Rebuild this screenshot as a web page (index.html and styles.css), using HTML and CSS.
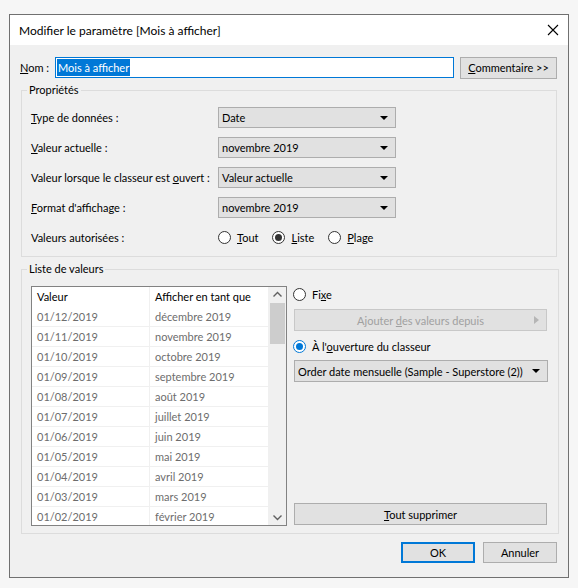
FILE: index.html
```html
<!DOCTYPE html>
<html lang="fr">
<head>
  <meta charset="UTF-8" />
  <title>Modifier le paramètre</title>
  <link rel="stylesheet" href="styles.css">
</head>
<body>

<div class="dialog">
  <div class="titlebar">
    <span class="title">Modifier le paramètre [Mois à afficher]</span>
    <svg class="close" width="12" height="12" viewBox="0 0 12 12">
      <path d="M1 1 L11 11 M11 1 L1 11" stroke="#000" stroke-width="1.1" fill="none"/>
    </svg>
  </div>

  <div class="dialog-body">
    <div class="name-row">
      <label class="name-label"><u>N</u>om :</label>
      <div class="name-input"><span class="selected">Mois à afficher</span></div>
      <button class="btn comment-btn"><u>C</u>ommentaire &gt;&gt;</button>
    </div>

    <fieldset class="group">
      <legend>Propriétés</legend>
      <div class="props">
        <label><u>T</u>ype de données :</label>
        <div class="combo"><span>Date</span><span class="arrow"></span></div>

        <label><u>V</u>aleur actuelle :</label>
        <div class="combo"><span>novembre 2019</span><span class="arrow"></span></div>

        <label>Valeur lorsque le classeur est <u>o</u>uvert :</label>
        <div class="combo"><span>Valeur actuelle</span><span class="arrow"></span></div>

        <label><u>F</u>ormat d'affichage :</label>
        <div class="combo"><span>novembre 2019</span><span class="arrow"></span></div>

        <label>Valeurs autorisées :</label>
        <div class="radios">
          <span class="radio-item"><span class="radio"></span><span><u>T</u>out</span></span>
          <span class="radio-item"><span class="radio checked"></span><span><u>L</u>iste</span></span>
          <span class="radio-item"><span class="radio"></span><span><u>P</u>lage</span></span>
        </div>
      </div>
    </fieldset>

    <fieldset class="group values-group">
      <legend>Liste de valeurs</legend>
      <div class="values">
        <div class="listbox">
          <div class="list-rows">
            <div class="list-row head"><span>Valeur</span><span>Afficher en tant que</span></div>
            <div class="list-row"><span>01/12/2019</span><span>décembre 2019</span></div>
            <div class="list-row"><span>01/11/2019</span><span>novembre 2019</span></div>
            <div class="list-row"><span>01/10/2019</span><span>octobre 2019</span></div>
            <div class="list-row"><span>01/09/2019</span><span>septembre 2019</span></div>
            <div class="list-row"><span>01/08/2019</span><span>août 2019</span></div>
            <div class="list-row"><span>01/07/2019</span><span>juillet 2019</span></div>
            <div class="list-row"><span>01/06/2019</span><span>juin 2019</span></div>
            <div class="list-row"><span>01/05/2019</span><span>mai 2019</span></div>
            <div class="list-row"><span>01/04/2019</span><span>avril 2019</span></div>
            <div class="list-row"><span>01/03/2019</span><span>mars 2019</span></div>
            <div class="list-row"><span>01/02/2019</span><span>février 2019</span></div>
          </div>
          <div class="scrollbar">
            <svg class="sb-arrow" width="17" height="16" viewBox="0 0 17 16">
              <path d="M4.5 9.5 L8.5 5.5 L12.5 9.5" stroke="#606060" stroke-width="1.4" fill="none"/>
            </svg>
            <div class="sb-thumb"></div>
            <div class="sb-track"></div>
            <svg class="sb-arrow" width="17" height="16" viewBox="0 0 17 16">
              <path d="M4.5 6.5 L8.5 10.5 L12.5 6.5" stroke="#606060" stroke-width="1.4" fill="none"/>
            </svg>
          </div>
        </div>

        <div class="source">
          <span class="radio-item"><span class="radio"></span><span>Fi<u>x</u>e</span></span>
          <button class="btn wide-btn disabled">
            <span>Ajouter <u>d</u>es valeurs depuis</span>
            <svg class="side-arrow" width="5" height="8" viewBox="0 0 5 8"><path d="M0 0 L5 4 L0 8 Z" fill="#b5b5b5"/></svg>
          </button>
          <span class="radio-item"><span class="radio checked blue"></span><span>À l'<u>o</u>uverture du classeur</span></span>
          <div class="combo source-combo"><span>Order date mensuelle (Sample - Superstore (2))</span><span class="arrow"></span></div>
          <button class="btn wide-btn clear-btn"><u>T</u>out supprimer</button>
        </div>
      </div>
    </fieldset>

    <div class="actions">
      <button class="btn action-btn default">OK</button>
      <button class="btn action-btn">Annuler</button>
    </div>
  </div>
</div>

</body>
</html>
```

FILE: styles.css
```css
body {
  margin: 0;
  background-color: #f6f6f6;
  font-family: 'Segoe UI', 'Lato', sans-serif;
  font-size: 11px;
  color: #000;
}

u {
  text-decoration: underline;
  text-underline-offset: 1px;
}

label,
span,
button {
  white-space: nowrap;
}

.dialog {
  margin: 14px 0 0 9px;
  width: 560px;
  height: 564px;
  box-sizing: border-box;
  border: 1px solid #707070;
  background-color: #f0f0f0;
  display: flex;
  flex-direction: column;
}

.titlebar {
  height: 30px;
  background: #fff;
  display: flex;
  align-items: center;
  justify-content: space-between;
  padding: 0 9px 0 9px;
}

.title {
  font-size: 12px;
}

.dialog-body {
  padding: 12px 11px 0 10px;
}

/* name row */
.name-row {
  display: flex;
  align-items: center;
  height: 21px;
}

.name-label {
  width: 35px;
}

.name-input {
  width: 399px;
  height: 21px;
  box-sizing: border-box;
  border: 1px solid #0078d7;
  background: #fff;
  display: flex;
  align-items: center;
  padding-left: 1px;
}

.selected {
  background: #0078d7;
  color: #fff;
  line-height: 17px;
  padding: 0 1px;
}

.btn {
  font-family: inherit;
  font-size: 11px;
  color: #000;
  background: #e1e1e1;
  border: 1px solid #adadad;
  box-sizing: border-box;
  padding: 0;
  margin: 0;
}

.comment-btn {
  width: 97px;
  height: 22px;
  margin-left: 6px;
}

/* group boxes */
.group {
  margin: 4px 0 0 1px;
  border: 1px solid #dcdcdc;
  padding: 9px 10px 8px 9px;
}

.group legend {
  padding: 0 2px;
  margin-left: -4px;
  line-height: 16px;
}

.props {
  display: grid;
  grid-template-columns: 187px 178px;
  grid-auto-rows: 21px;
  row-gap: 9px;
  align-items: center;
}

.combo {
  height: 21px;
  box-sizing: border-box;
  border: 1px solid #adadad;
  background: #e1e1e1;
  display: flex;
  align-items: center;
  justify-content: space-between;
  padding: 0 7px 0 3px;
}

.arrow {
  width: 0;
  height: 0;
  border-left: 4px solid transparent;
  border-right: 4px solid transparent;
  border-top: 4px solid #000;
}

.radios {
  display: flex;
}

.radio-item {
  display: flex;
  align-items: center;
  gap: 6px;
  margin-right: 14px;
}

.radio {
  width: 13px;
  height: 13px;
  box-sizing: border-box;
  border: 1px solid #333;
  border-radius: 50%;
  background: #fff;
  display: flex;
  align-items: center;
  justify-content: center;
}

.radio.checked::after {
  content: "";
  width: 7px;
  height: 7px;
  border-radius: 50%;
  background: #333;
}

.radio.blue {
  border-color: #0078d7;
}

.radio.blue::after {
  background: #0078d7;
}

/* values group */
.values-group {
  padding: 9px 9px 7px 9px;
}

.values {
  display: flex;
  gap: 6px;
}

.listbox {
  width: 256px;
  height: 240px;
  box-sizing: border-box;
  border: 1px solid #828282;
  background: #fff;
  display: flex;
  overflow: hidden;
}

.list-rows {
  flex: 1;
}

.list-row {
  display: grid;
  grid-template-columns: 118px 1fr;
  height: 20px;
  box-sizing: border-box;
  border-bottom: 1px solid #f0f0f0;
  color: #6d6d6d;
  line-height: 19px;
}

.list-row span {
  padding-left: 5px;
  border-right: 1px solid #f0f0f0;
}

.list-row.head {
  color: #000;
  border-bottom-color: #fff;
  line-height: 20px;
}

.scrollbar {
  width: 17px;
  background: #f0f0f0;
  display: flex;
  flex-direction: column;
}

.sb-thumb {
  height: 41px;
  background: #cdcdcd;
  margin: 0 1px;
}

.sb-track {
  flex: 1;
}

.source {
  flex: 1;
  display: flex;
  flex-direction: column;
  padding-right: 1px;
}

.source .radio-item {
  height: 16px;
}

.wide-btn {
  width: 253px;
  height: 22px;
}

.disabled {
  margin: 7px 0 7px 1px;
  color: #a0a0a0;
  border-color: #c8c8c8;
  display: flex;
  align-items: center;
  justify-content: center;
  position: relative;
}

.side-arrow {
  position: absolute;
  right: 7px;
  top: 6px;
}

.source-combo {
  margin: 6px 0 0 1px;
  height: 22px;
  width: 254px;
}

.clear-btn {
  margin: auto 0 1px 1px;
}

/* dialog buttons */
.actions {
  display: flex;
  justify-content: flex-end;
  gap: 8px;
  margin-top: 8px;
}

.action-btn {
  width: 74px;
  height: 21px;
}

.action-btn.default {
  border: 2px solid #0078d7;
}
```
